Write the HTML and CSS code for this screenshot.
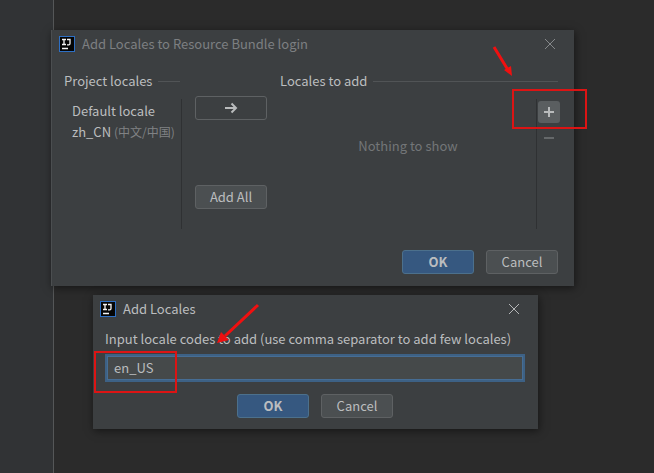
FILE: index.html
```html
<!DOCTYPE html>
<html lang="en">
<head>
<meta charset="utf-8">
<title>Add Locales</title>
<link rel="stylesheet" href="styles.css">
</head>
<body>
<main class="desktop">
  <div class="gutter"></div>

  <section class="dialog dialog-bundle" role="dialog" aria-labelledby="bundle-title">
    <header class="titlebar">
      <svg class="logo" viewBox="0 0 16 16" aria-hidden="true">
        <rect width="16" height="16" fill="#2d6fc4"/>
        <rect x="1" y="1" width="14" height="14" fill="#050505"/>
        <path d="M3 3.500h4M5 3.500v5M3 8.500h4M8 3.500h3v4q0 1.300-1.300 1.300H8M3 12.500h6" fill="none" stroke="#f4f4f4" stroke-width="1.300"/>
      </svg>
      <h1 class="title title-inactive" id="bundle-title">Add Locales to Resource Bundle login</h1>
      <button class="close close-inactive" type="button" aria-label="Close">
        <svg viewBox="0 0 10 10"><path d="M0 0l10 10M10 0L0 10"/></svg>
      </button>
    </header>
    <div class="columns">
      <section class="column">
        <h2 class="group project-group">Project locales</h2>
        <ul class="list project-list">
          <li>Default locale</li>
          <li>zh_CN <span class="muted">(中文/中国)</span></li>
        </ul>
      </section>
      <div class="transfer">
        <button class="button button-plain" type="button" aria-label="Add selected">
          <svg class="arrow" viewBox="0 0 14 12"><path d="M1 6h11M7.500 1.500L12 6L7.500 10.500"/></svg>
        </button>
        <button class="button" type="button">Add All</button>
      </div>
      <section class="column">
        <h2 class="group">Locales to add</h2>
        <div class="list add-list">
          <p class="empty">Nothing to show</p>
          <div class="tools">
            <button class="tool tool-active" type="button" aria-label="Add">
              <svg viewBox="0 0 10 10"><path d="M5 0v10M0 5h10"/></svg>
            </button>
            <button class="tool" type="button" aria-label="Remove" disabled>
              <svg viewBox="0 0 10 10"><path d="M0 5h10"/></svg>
            </button>
          </div>
        </div>
      </section>
    </div>
    <footer class="actions actions-end">
      <button class="button button-primary" type="button">OK</button>
      <button class="button" type="button">Cancel</button>
    </footer>
  </section>

  <section class="dialog dialog-add" role="dialog" aria-labelledby="add-title">
    <header class="titlebar">
      <svg class="logo" viewBox="0 0 16 16" aria-hidden="true">
        <rect width="16" height="16" fill="#2d6fc4"/>
        <rect x="1" y="1" width="14" height="14" fill="#050505"/>
        <path d="M3 3.500h4M5 3.500v5M3 8.500h4M8 3.500h3v4q0 1.300-1.300 1.300H8M3 12.500h6" fill="none" stroke="#f4f4f4" stroke-width="1.300"/>
      </svg>
      <h1 class="title" id="add-title">Add Locales</h1>
      <button class="close" type="button" aria-label="Close">
        <svg viewBox="0 0 10 10"><path d="M0 0l10 10M10 0L0 10"/></svg>
      </button>
    </header>
    <form class="form">
      <label class="label" for="codes">Input locale codes to add (use comma separator to add few locales)</label>
      <input class="field" id="codes" type="text" value="en_US">
      <div class="actions actions-center">
        <button class="button button-primary" type="button">OK</button>
        <button class="button" type="button">Cancel</button>
      </div>
    </form>
  </section>

  <svg class="marks" width="654" height="473" viewBox="0 0 654 473" aria-hidden="true">
    <rect x="513" y="90" width="73" height="38"/>
    <rect x="95" y="352" width="81" height="40"/>
    <path d="M494 47L508 70M258 305L225 336"/>
    <path class="head" d="M512 76L504 70L511 66ZM217 343L221 332L229 340Z"/>
  </svg>
</main>
</body>
</html>
```

FILE: styles.css
```css
* { box-sizing: border-box; }

body {
  margin: 0;
  background: #2b2b2b;
  color: #bbbdbf;
  font: 13px/20px "Noto Sans CJK SC", "Noto Sans", sans-serif;
}

h1, h2, p, ul { margin: 0; padding: 0; font-size: inherit; font-weight: 400; }
ul { list-style: none; }
button, input { font: inherit; color: inherit; }
button { padding: 0; }

.desktop { position: relative; min-height: 100vh; overflow: hidden; display: flex; }
.gutter { width: 54px; background: #313335; border-right: 1px solid #555758; }

.dialog {
  position: absolute;
  background: #3c3f41;
  box-shadow: 1px 2px 8px rgba(0, 0, 0, 0.5);
}
.dialog-bundle { left: 51px; top: 30px; width: 523px; border-left: 1px solid #4b4e50; padding-bottom: 12px; }
.dialog-add { left: 93px; top: 295px; width: 445px; padding-bottom: 11px; }

.titlebar { display: flex; align-items: center; gap: 7px; height: 28px; padding: 0 19px 0 7px; }
.logo { width: 16px; height: 16px; }
.title { flex: 1; }
.title-inactive { color: #7d7f81; }
.close { display: flex; border: 0; background: none; }
.close svg { width: 10px; height: 10px; overflow: visible; fill: none; stroke: #b4b6b7; stroke-width: 1; }
.close-inactive svg { stroke: #85888a; }

.columns { display: grid; grid-template-columns: 118px 72px 1fr; gap: 13px; padding: 13px 14px 0 12px; }
.group { display: flex; align-items: center; gap: 6px; margin-bottom: 8px; padding-right: 2px; }
.group::after { content: ""; flex: 1; height: 1px; background: #515456; }
.list { height: 130px; border-right: 1px solid #2f3133; }
.project-list { padding: 1px 0 0 8px; line-height: 21px; }
.muted { color: #808284; font-size: 12px; }
.transfer { display: flex; flex-direction: column; justify-content: space-between; padding: 25px 0 20px; }

.add-list { display: flex; border: 0; }
.empty { flex: 1; align-self: center; padding-bottom: 36px; text-align: center; color: #737678; }
.tools { display: flex; flex-direction: column; gap: 4px; padding: 2px 0 0 1px; border-left: 1px solid #2f3133; }
.tool { display: grid; place-items: center; width: 22px; height: 22px; border: 0; border-radius: 3px; background: none; }
.tool svg { width: 10px; height: 10px; fill: none; stroke: #65686a; stroke-width: 2; }
.tool-active { background: #5a5e60; }
.tool-active svg { stroke: #b9bbbc; }

.button {
  display: grid;
  place-items: center;
  width: 72px;
  height: 24px;
  border: 1px solid #5e6163;
  border-radius: 3px;
  background: #4b4f51;
  line-height: 20px;
}
.button-plain { background: #3c3f41; }
.button-primary { border-color: #4c708c; background: #365880; font-weight: 700; }
.arrow { width: 14px; height: 12px; fill: none; stroke: #b9bbbc; stroke-width: 2; }

.actions { display: flex; gap: 12px; }
.actions-end { justify-content: flex-end; padding: 21px 16px 0 0; }
.actions-center { justify-content: center; padding-top: 12px; }

.form { padding: 6px 13px 0 12px; }
.label { display: block; margin-bottom: 5px; }
.field {
  display: block;
  width: 100%;
  height: 28px;
  padding: 0 7px 1px;
  border: 2px solid #3d6185;
  outline: 0;
  background: #45494a;
  box-shadow: inset 0 0 0 1px #466d94;
}

.marks { position: absolute; left: 0; top: 0; pointer-events: none; fill: none; stroke: #dc1414; stroke-width: 2; }
.marks path { stroke: #f01010; stroke-width: 3; }
.marks .head { fill: #f01010; stroke: none; }
```
